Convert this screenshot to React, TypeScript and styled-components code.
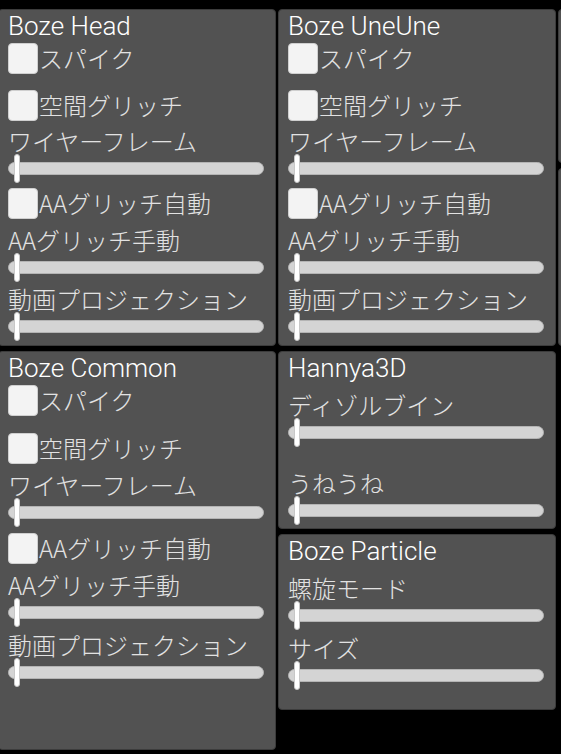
import styled, { createGlobalStyle } from "styled-components";

type Item =
  | { kind: "check"; label: string; first?: boolean }
  | { kind: "slider"; label: string; value: number }
  | { kind: "gap" };

type PanelData = { title: string; height: number; items: Item[] };

const glitchItems: Item[] = [
  { kind: "check", label: "スパイク", first: true },
  { kind: "check", label: "空間グリッチ" },
  { kind: "slider", label: "ワイヤーフレーム", value: 0 },
  { kind: "check", label: "AAグリッチ自動" },
  { kind: "slider", label: "AAグリッチ手動", value: 0 },
  { kind: "slider", label: "動画プロジェクション", value: 0 },
];

const columns: PanelData[][] = [
  [
    { title: "Boze Head", height: 337, items: glitchItems },
    { title: "Boze Common", height: 399, items: glitchItems },
  ],
  [
    { title: "Boze UneUne", height: 337, items: glitchItems },
    {
      title: "Hannya3D",
      height: 178,
      items: [
        { kind: "slider", label: "ディゾルブイン", value: 0 },
        { kind: "gap" },
        { kind: "slider", label: "うねうね", value: 0 },
      ],
    },
    {
      title: "Boze Particle",
      height: 176,
      items: [
        { kind: "slider", label: "螺旋モード", value: 0 },
        { kind: "slider", label: "サイズ", value: 0 },
      ],
    },
  ],
  [
    { title: "", height: 154, items: [] },
    { title: "", height: 178, items: [] },
  ],
];

const GlobalStyle = createGlobalStyle`
  html, body {
    margin: 0;
    padding: 0;
    background: #000;
    overflow: hidden;
  }
`;

const Viewport = styled.main`
  width: 100vw;
  height: 100vh;
  overflow: hidden;
`;

const Board = styled.div`
  display: flex;
  gap: 2px;
  margin-left: -2px;
  padding-top: 9px;
  width: max-content;
`;

const Column = styled.div`
  display: flex;
  flex-direction: column;
  gap: 5px;
  width: 278px;
`;

const Panel = styled.section<{ $height: number }>`
  box-sizing: border-box;
  height: ${(p) => p.$height}px;
  padding: 0 11px 0 9px;
  background: #525252;
  border: 1px solid #3c3c3c;
  border-radius: 4px;
  overflow: hidden;
  display: flex;
  flex-direction: column;
`;

const Title = styled.h2`
  margin: 0;
  height: 32px;
  line-height: 32px;
  font-family: Roboto, "Liberation Sans", sans-serif;
  font-weight: 300;
  font-size: 26px;
  color: #fff;
  white-space: nowrap;
`;

const Label = styled.div`
  height: 26px;
  line-height: 26px;
  font-family: "Noto Sans CJK JP", "Noto Sans", sans-serif;
  font-weight: 300;
  font-size: 24px;
  color: #e2e2e2;
  white-space: nowrap;

  ${Title} + & {
    margin-top: 8px;
  }
`;

const CheckRow = styled.label<{ $first?: boolean }>`
  display: flex;
  align-items: flex-start;
  height: ${(p) => (p.$first ? 48 : 40)}px;
  padding-top: 1px;
  box-sizing: border-box;
  font-family: "Noto Sans CJK JP", "Noto Sans", sans-serif;
  font-weight: 300;
  font-size: 24px;
  line-height: 30px;
  color: #e2e2e2;
  white-space: nowrap;
`;

const Box = styled.span`
  flex: none;
  width: 28px;
  height: 29px;
  margin-right: 1px;
  background: #f3f3f3;
  border: 1px solid #cfcfcf;
  border-radius: 4px;
`;

const SliderArea = styled.div`
  position: relative;
  height: 34px;
`;

const Track = styled.div`
  position: absolute;
  left: 0;
  right: 0;
  top: 8px;
  height: 13px;
  box-sizing: border-box;
  background: #d4d4d4;
  border: 1px solid #b4b4b4;
  border-radius: 7px;
`;

const Thumb = styled.div`
  position: absolute;
  top: 0;
  width: 6px;
  height: 29px;
  box-sizing: border-box;
  background: #fff;
  border: 1px solid #c8c8c8;
  border-radius: 3px;
`;

const Spacer = styled.div`
  height: 22px;
`;

function Slider({ label, value }: { label: string; value: number }) {
  return (
    <>
      <Label>{label}</Label>
      <SliderArea>
        <Track />
        <Thumb style={{ left: `calc(6px + (100% - 18px) * ${value})` }} />
      </SliderArea>
    </>
  );
}

function PanelView({ data }: { data: PanelData }) {
  return (
    <Panel $height={data.height}>
      {data.title && <Title>{data.title}</Title>}
      {data.items.map((it, i) => {
        if (it.kind === "check")
          return (
            <CheckRow key={i} $first={it.first}>
              <Box />
              {it.label}
            </CheckRow>
          );
        if (it.kind === "slider")
          return <Slider key={i} label={it.label} value={it.value} />;
        return <Spacer key={i} />;
      })}
    </Panel>
  );
}

export default function App() {
  return (
    <Viewport>
      <GlobalStyle />
      <Board>
        {columns.map((col, ci) => (
          <Column key={ci}>
            {col.map((p, pi) => (
              <PanelView key={pi} data={p} />
            ))}
          </Column>
        ))}
      </Board>
    </Viewport>
  );
}
